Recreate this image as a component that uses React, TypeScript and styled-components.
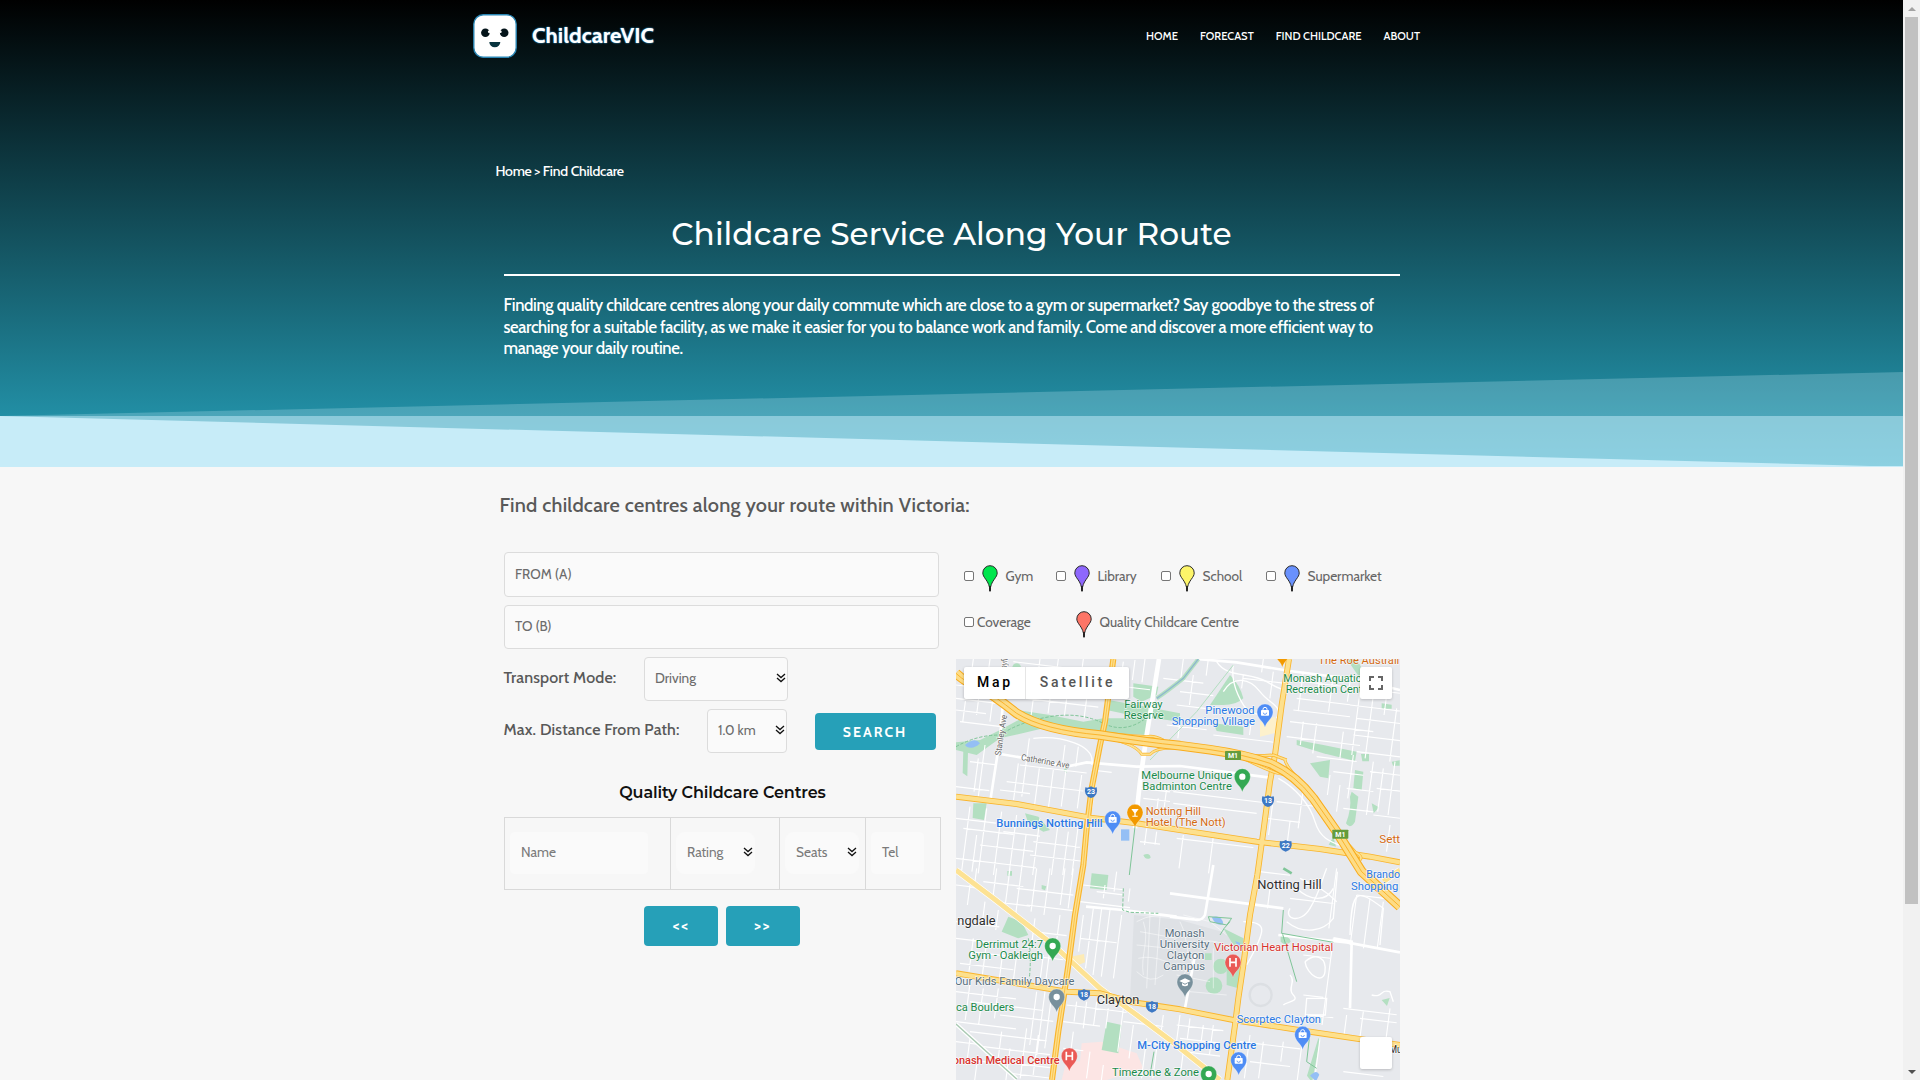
import React from "react";
import styled, { createGlobalStyle } from "styled-components";

const GlobalStyle = createGlobalStyle`
  *, *::before, *::after { box-sizing: border-box; }
  html, body { margin: 0; padding: 0; height: 100%; overflow: hidden; }
  body { font-family: Cabin, Lato, "Liberation Sans", sans-serif; color: #595959; background: #f7f7f7; }
`;

/* ---------- page frame ---------- */

const Page = styled.div`
  display: flex;
  width: 1920px;
  height: 1080px;
  overflow: hidden;
  background: #f7f7f7;
`;

const Content = styled.div`
  width: 1903px;
  height: 1080px;
  overflow: hidden;
`;

const ScrollTrack = styled.div`
  width: 17px;
  height: 1080px;
  display: flex;
  flex-direction: column;
  align-items: center;
  background: #f1f1f1;
`;

const ScrollArrow = styled.div<{ $down?: boolean }>`
  height: 17px;
  width: 17px;
  display: flex;
  align-items: center;
  justify-content: center;
  margin-top: ${(p) => (p.$down ? "auto" : "0")};

  &::before {
    content: "";
    border: 4px solid transparent;
    border-top-width: ${(p) => (p.$down ? "4px" : "0")};
    border-bottom-width: ${(p) => (p.$down ? "0" : "4px")};
    border-top-color: ${(p) => (p.$down ? "#505050" : "transparent")};
    border-bottom-color: ${(p) => (p.$down ? "transparent" : "#a3a3a3")};
  }
`;

const ScrollThumb = styled.div`
  width: 13px;
  height: 887px;
  background: #c1c1c1;
`;

/* ---------- hero ---------- */

const Hero = styled.header`
  position: relative;
  height: 467px;
  color: #fff;
  background: linear-gradient(180deg, #000 0%, #26a0b9 100%);
`;

const Slopes = styled.svg`
  position: absolute;
  left: 0;
  bottom: 0;
  width: 100%;
  height: 95px;
  display: block;
`;

const TopBar = styled.div`
  width: 957px;
  height: 72px;
  margin: 0 auto;
  display: flex;
  align-items: center;
  justify-content: space-between;
  padding: 0 10px 0 0;
`;

const Brand = styled.div`
  display: flex;
  align-items: center;
  gap: 15px;
`;

const BrandName = styled.span`
  font-size: 22px;
  line-height: 28px;
  font-weight: 700;
  letter-spacing: 0.12px;
  padding-bottom: 1px;
  text-shadow: 0 0 2px #2f8fc4, 0 0 1px #2f8fc4;
`;

const Nav = styled.nav`
  display: flex;
  gap: 22px;
  font-size: 11.2px;
  line-height: 16px;
  font-weight: 500;
`;

const HeroBody = styled.div`
  width: 896px;
  margin: 0 auto;
`;

const Breadcrumb = styled.div`
  padding-top: 90px;
  margin-left: -8px;
  font-size: 14px;
  line-height: 18px;
  font-weight: 500;
  letter-spacing: -0.26px;
`;

const HeroTitle = styled.h1`
  margin: 34px 0 0;
  font-family: Montserrat, Lato, sans-serif;
  font-size: 31.2px;
  line-height: 40px;
  font-weight: 500;
  letter-spacing: 0.03px;
  text-align: center;
`;

const Rule = styled.div`
  height: 2px;
  margin-top: 20px;
  background: #fff;
`;

const Lead = styled.p`
  margin: 19px 0 0;
  font-size: 16.7px;
  line-height: 21.7px;
  font-weight: 500;
  letter-spacing: -0.365px;
  white-space: nowrap;
`;

/* ---------- search section ---------- */

const Section = styled.main`
  width: 903px;
  margin: 0 auto;
`;

const SectionTitle = styled.h2`
  margin: 0 0 0 -0.5px;
  padding-top: 24px;
  font-size: 20px;
  line-height: 28px;
  font-weight: 500;
  letter-spacing: 0.21px;
`;

const Columns = styled.div`
  display: flex;
  align-items: flex-start;
  margin-top: 33px;
  padding-left: 4px;
`;

const FormColumn = styled.div`
  width: 437px;
  display: flex;
  flex-direction: column;
`;

const Field = styled.div<{ $w: number; $h?: number; $plain?: boolean; $r?: number }>`
  width: ${(p) => p.$w}px;
  height: ${(p) => p.$h ?? 44}px;
  flex: none;
  display: flex;
  align-items: center;
  justify-content: space-between;
  padding: 0 1px ${(p) => (p.$h === 45 ? 1 : 2)}px 10px;
  border: 1px solid ${(p) => (p.$plain ? "#fafafa" : "#dcdcdc")};
  border-radius: ${(p) => p.$r ?? 4}px;
  background: #fafafa;
  color: ${(p) => (p.$plain ? "#7b7b7b" : "#6c6c6c")};
  font-size: 13.6px;
  line-height: 18px;
  white-space: nowrap;
`;

const FormRow = styled.div`
  display: flex;
  align-items: center;
  height: 44px;
  margin-top: 8px;
`;

const Label = styled.span<{ $w: number }>`
  width: ${(p) => p.$w}px;
  font-size: 16px;
  line-height: 22px;
  font-weight: 500;
  letter-spacing: 0.17px;
  padding-bottom: 2px;
  margin-left: -0.5px;
`;

const Button = styled.button<{ $w: number; $h: number; $size?: number }>`
  width: ${(p) => p.$w}px;
  height: ${(p) => p.$h}px;
  padding: 0;
  border: 0;
  border-radius: 4px;
  background: #26a0b8;
  color: #fff;
  font-family: inherit;
  font-size: ${(p) => p.$size ?? 14}px;
  line-height: 18px;
  font-weight: 700;
  letter-spacing: 2px;
`;

const TableTitle = styled.h3`
  margin: 30px 0 0;
  font-family: Montserrat, Lato, sans-serif;
  font-size: 16px;
  line-height: 20px;
  font-weight: 600;
  letter-spacing: -0.12px;
  text-align: center;
  color: #111;
`;

const FilterTable = styled.div`
  display: grid;
  grid-template-columns: 165px 109px 86px 75px;
  height: 73px;
  margin-top: 14px;
  border: 1px solid #d9d9d9;
`;

const FilterCell = styled.div`
  display: flex;
  align-items: center;
  padding: 0 0 1px 5px;

  & + & {
    border-left: 1px solid #d9d9d9;
  }
`;

const Pager = styled.div`
  display: flex;
  gap: 8px;
  margin: 16px 0 0 140px;
`;

const MapColumn = styled.div`
  width: 444px;
  margin-left: 15px;
`;

const Legend = styled.div<{ $cols: string }>`
  display: grid;
  grid-template-columns: ${(p) => p.$cols};
  height: 46px;
  padding: 2px 0 0 8px;
  align-items: center;
`;

const LegendItem = styled.div`
  display: flex;
  align-items: center;
  font-size: 13.65px;
  line-height: 18px;
  color: #666;
  white-space: nowrap;
`;

const Box = styled.span`
  width: 10px;
  height: 10px;
  flex: none;
  border: 1px solid #767676;
  border-radius: 2px;
  background: #fff;
`;

const PinSlot = styled.svg`
  width: 16px;
  height: 27px;
  margin: 4px 8px 0 7.5px;
  display: block;
  flex: none;
`;

const MapFrame = styled.div`
  position: relative;
  width: 444px;
  height: 421px;
  margin-top: 15px;
  overflow: hidden;
  background: #e8eaed;
`;

const MapArt = styled.svg`
  display: block;
  width: 444px;
  height: 421px;
`;

const MapTypes = styled.div`
  position: absolute;
  left: 8px;
  top: 8px;
  display: flex;
  height: 32px;
  border-radius: 2px;
  background: #fff;
  box-shadow: 0 1px 3px rgba(0, 0, 0, 0.25);
  font: 500 14px/31px Roboto, sans-serif;
`;

const MapType = styled.span<{ $w: number; $active?: boolean }>`
  width: ${(p) => p.$w}px;
  padding-left: 1px;
  text-align: center;
  letter-spacing: 2.7px;
  color: ${(p) => (p.$active ? "#000" : "#565656")};

  & + & {
    padding-left: 0;
    border-left: 1px solid #e6e6e6;
  }
`;

const MapControl = styled.div<{ $top: number }>`
  position: absolute;
  right: 8px;
  top: ${(p) => p.$top}px;
  width: 32px;
  height: 32px;
  display: flex;
  align-items: center;
  justify-content: center;
  border-radius: 2px;
  background: #fff;
  box-shadow: 0 1px 3px rgba(0, 0, 0, 0.2);
`;

/* ---------- small drawings ---------- */

const Chevrons = () => (
  <svg width="10" height="10" viewBox="0 0 10 10" fill="none" stroke="#111" strokeWidth="1.3">
    <path d="M1 1l4 3.600L9 1M1 5l4 3.600L9 5" />
  </svg>
);

const FaceLogo = () => (
  <svg width="44" height="44" viewBox="0 0 44 44">
    <rect x="0.8" y="0.8" width="42.4" height="42.4" rx="9.5" fill="#fff" stroke="#2a86b4" strokeWidth="1.4" />
    <circle cx="12.400" cy="18.800" r="4.3" fill="#04141a" />
    <circle cx="31.200" cy="18.800" r="4.3" fill="#04141a" />
    <circle cx="16.200" cy="17.800" r="1.3" fill="#fff" />
    <circle cx="27.400" cy="17.800" r="1.3" fill="#fff" />
    <path d="M16.300 28h11a5.500 5.200 0 0 1-11 0z" fill="#08343f" />
  </svg>
);

const LegendPin = ({ color }: { color: string }) => (
  <PinSlot viewBox="0 0 16 27">
    <path
      d="M8 26C7.600 20.500 6.200 17.800 3.800 14.400C2 11.900.8 10.200.8 7.900a7.200 7.200 0 0 1 14.400 0c0 2.300-1.200 4-3 6.500C9.800 17.800 8.400 20.500 8 26z"
      fill={color}
      stroke="#2b2b2b"
      strokeWidth="1"
    />
    <path d="M8 21v5.600" stroke="#111" strokeWidth="1.300" />
  </PinSlot>
);

/* ---------- map data ---------- */

type Seg = [number, number, number];

const northSouth: Seg[] = [
  [70, 12, 50], [120, 12, 95], [160, 12, 130], [270, 12, 50], [325, 12, 60], [400, 12, 60],
  [90, 100, 80], [50, 110, 90], [130, 120, 80], [250, 130, 50], [300, 130, 45], [350, 130, 50], [410, 130, 60],
  [520, 20, 90], [555, 15, 60], [585, 12, 70],
  [105, 270, 155], [85, 310, 100], [205, 325, 110], [238, 250, 175], [268, 340, 115], [310, 345, 115], [345, 270, 60],
  [348, 345, 110], [385, 275, 60], [395, 360, 100], [440, 350, 110],
  [60, 455, 190], [80, 540, 110], [110, 460, 195], [155, 470, 190], [200, 480, 180], [228, 540, 110], [270, 490, 170],
  [325, 500, 160], [355, 530, 130], [385, 510, 150],
  [590, 520, 50], [620, 530, 40], [625, 430, 40], [650, 400, 60],
  [700, 12, 70], [730, 60, 90], [775, 12, 50], [880, 60, 40], [940, 12, 40], [970, 50, 80], [905, 190, 50], [690, 200, 50],
  [1060, 50, 120], [1110, 60, 60], [1150, 60, 110], [1200, 80, 60], [1230, 110, 190], [1270, 120, 190], [1310, 120, 60], [1340, 160, 160],
  [1060, 200, 70], [1100, 205, 90], [1180, 230, 80], [1210, 300, 130], [1270, 320, 160], [1300, 340, 130], [1335, 320, 160],
  [1170, 390, 80], [1140, 360, 60], [1320, 510, 80],
  [970, 430, 110], [1060, 400, 120], [1020, 500, 70], [700, 540, 100], [790, 545, 110],
  [80, 640, 60], [140, 640, 80], [180, 640, 120], [215, 640, 140], [260, 640, 130], [300, 640, 140], [345, 640, 110], [370, 640, 120],
  [105, 740, 70], [60, 690, 60], [145, 765, 60], [255, 790, 70], [330, 780, 110], [70, 850, 100], [110, 860, 110], [160, 880, 100],
  [200, 900, 80], [300, 880, 110], [280, 900, 80],
  [400, 780, 110], [430, 760, 180], [455, 760, 200], [480, 765, 200], [515, 780, 190], [540, 700, 40], [500, 650, 60], [465, 690, 40],
  [60, 985, 110], [100, 1000, 110], [145, 1000, 90], [260, 1010, 160], [285, 1010, 190], [305, 1020, 160],
  [380, 1040, 60], [410, 1040, 80], [440, 1040, 70], [475, 1060, 60], [520, 1060, 130], [550, 1110, 100], [590, 1150, 120],
  [60, 1150, 80], [155, 1130, 90], [180, 1180, 95], [230, 1120, 150], [265, 1140, 120], [80, 1230, 45],
  [370, 1130, 80], [420, 1190, 80], [460, 1230, 45], [640, 1080, 60], [620, 1180, 90],
  [690, 1080, 80], [720, 1090, 60], [760, 1110, 50], [790, 1110, 90], [700, 1190, 60],
  [1060, 1135, 140], [1110, 1150, 120], [1190, 1080, 70], [1240, 1070, 90], [1150, 850, 260], [1320, 1060, 100],
  [1220, 720, 150], [1260, 730, 150], [1300, 740, 140], [960, 700, 60], [1160, 640, 180],
  [940, 1160, 110], [900, 1140, 130], [1000, 1160, 60],
];

const eastWest: Seg[] = [
  [18, 90, 70], [18, 130, 120], [18, 165, 90], [30, 200, 130], [190, 20, 180], [225, 130, 220], [480, 90, 120],
  [60, 320, 80], [210, 330, 200], [170, 380, 110], [250, 390, 150], [18, 395, 100], [150, 405, 90],
  [425, 345, 60], [18, 490, 120], [40, 520, 150], [90, 570, 160], [18, 610, 240], [160, 530, 110], [250, 560, 140], [240, 600, 170],
  [580, 430, 80], [570, 560, 60], [570, 400, 90], [640, 70, 120], [690, 110, 100], [680, 150, 90], [650, 210, 120], [880, 70, 120], [790, 240, 180],
  [1020, 75, 330], [1040, 130, 160], [1030, 165, 170], [1020, 200, 250], [1200, 150, 150], [1220, 190, 130], [1010, 245, 220], [1210, 240, 140],
  [1100, 305, 120], [1220, 290, 130], [1150, 350, 90], [1190, 400, 80], [1260, 350, 90], [1280, 400, 70], [1180, 460, 90], [1270, 480, 80],
  [670, 410, 270], [670, 445, 250], [950, 490, 100], [980, 440, 120], [680, 550, 230],
  [18, 690, 60], [100, 680, 120], [200, 700, 170], [130, 740, 110], [230, 750, 140], [18, 800, 130], [250, 830, 100], [18, 850, 120], [60, 890, 170],
  [30, 925, 160], [220, 900, 120], [390, 740, 150], [400, 690, 120], [390, 850, 110], [440, 710, 80],
  [18, 1010, 180], [60, 1040, 220], [150, 1080, 160], [18, 1100, 180], [60, 1130, 230], [100, 1175, 200], [18, 1160, 70], [18, 1210, 100],
  [150, 1220, 150], [180, 1255, 130], [350, 1050, 180], [340, 1100, 110], [520, 1100, 120], [560, 1160, 90], [340, 1180, 60],
  [680, 1110, 140], [690, 1150, 120], [700, 1190, 110], [870, 1160, 180], [900, 1220, 120], [1080, 1080, 70], [1180, 1060, 160], [1060, 900, 80],
  [1060, 1020, 60], [1220, 720, 90], [1020, 730, 130], [930, 650, 90], [1180, 1250, 120], [1230, 1090, 110],
];

const streets =
  northSouth.map(([x, y, l]) => `M${x} ${y}l${-0.13 * l} ${l}`).join("") +
  eastWest.map(([x, y, l]) => `M${x} ${y}l${l} ${0.12 * l}`).join("");

const curvedStreets = [
  "M820 110C850 60 900 70 930 110S1000 150 980 190",
  "M800 20C830 70 900 50 950 80S1000 100 1010 110",
  "M850 30C840 90 880 160 900 170L985 200",
  "M250 250C330 240 440 270 425 330",
  "M1020 760C1000 790 1050 810 1080 760S1110 690 1130 640",
  "M1010 800C1060 840 1120 830 1150 790L1162 650",
  "M1040 700C1080 740 1130 740 1150 700M1050 670C1090 690 1120 700 1160 740",
  "M985 370C1040 400 1080 450 1095 500S1140 560 1180 575",
  "M880 800Q940 800 935 830T890 930",
  "M1065 920C1100 890 1130 910 1125 950S1070 960 1065 920",
  "M1020 960C1040 980 1010 1000 1030 1020S1010 1040 1000 1050",
  "M1070 1030h60l-4 50h-60z",
  "M1200 840C1205 700 1220 700 1300 760L1290 870",
  "M1265 1020C1300 1030 1290 1000 1320 1010L1330 1040",
];

const campusPaths = [
  "M560 800Q610 770 680 790M570 830L680 850M560 870L660 880M565 910Q600 900 650 920M560 950Q600 990 640 960",
  "M600 780L590 1000M630 785L615 990M580 800C600 860 570 900 580 960M690 800C720 860 700 900 740 940",
  "M700 780L780 800L830 840M740 900L700 960L720 1010L830 1020M790 880V1000M750 860Q800 850 840 880M680 960L780 980",
];

const highways = [
  "M1017 12L995 150L975 300L960 380L940 530L922 660L900 780L880 930L865 1030L855 1110L832 1275",
  "M490 12L465 200L450 270L425 400L410 520L400 630L375 780L355 930L342 1020L325 1130L306 1275",
  "M18 425L200 447L420 488L560 505L690 525L920 560L1110 582L1260 605L1350 622",
  "M18 955L200 985L350 1010L450 1015L550 1042L690 1063L850 1095L1080 1130L1350 1170",
];

const diagonals = ["M18 645L130 730L310 870L450 1000L560 1080L660 1155L810 1275", "M1350 645L1300 680"];

const freeway =
  "M18 55Q50 85 80 90Q130 120 200 175Q280 225 450 240Q590 262 690 272L780 284Q880 298 960 325Q1035 358 1090 430L1160 530L1235 650L1350 755";

const ramps = [
  "M470 235Q560 245 590 245Q610 240 640 255",
  "M480 250Q560 270 575 298L600 298Q620 275 690 280",
  "M860 300Q920 305 970 300L1010 315",
  "M870 305Q960 350 985 355Q1060 365 1110 445",
  "M1005 315Q1010 340 1060 385L1130 470",
  "M1150 530Q1190 560 1215 590Q1240 605 1230 615",
];

const arterials = [
  "M627 12L608 130L590 240L570 380L555 520",
  "M150 297L240 312L350 335L410 322L560 335L690 333L960 368",
  "M170 12L150 250L122 430",
  "M740 12L860 22L1020 48L1230 75L1350 105",
  "M660 715L770 730L960 755L1000 760",
  "M790 630L765 780Q755 800 730 793L660 785",
  "M735 900L705 1060",
  "M985 840L1190 862L1350 892",
  "M1150 850L1205 860L1200 1060",
  "M408 755L520 765L680 785",
];

const parks = [
  "M200 165L300 180L400 200L460 190L530 190L600 170L590 240L480 235L380 225L290 215z",
  "M18 262L90 255L150 225L215 190L280 220L230 232L150 250L80 300L18 285z",
  "M550 85L625 95L620 120L575 140L550 125z",
  "M475 135L560 150L690 175L690 200L540 180L470 165z",
  "M780 150L840 60Q870 90 880 130Q860 150 820 150z",
  "M790 205L880 215L880 240L800 228z",
  "M1040 255L1120 270L1220 290L1215 318L1120 295L1040 270z",
  "M1080 325L1140 315L1135 370L1110 365z",
  "M1190 12h30l25 45-20 5z",
  "M1215 345L1240 350L1235 405L1210 400z",
  "M1205 410L1225 425L1215 500Q1200 525 1188 505Q1205 460 1200 425z",
  "M1265 445l22 12-16 18z M1325 320l24-4v16h-20z M1295 145l30 4v12h-30z M1233 297h24v22h-20z",
  "M70 445h40l-8 50-34-6z M40 285l14 4-2 75-14-10z M225 475l40 10 35 40-20 5-45-25z",
  "M425 655L475 660L470 705L420 700z",
  "M175 785L215 800L235 840L205 850L155 830z",
  "M470 1100L515 1110L505 1195L455 1185z",
  "M340 345l10-8v18z M580 600q20-8 22 8-14 10-22-8z M275 690l14 4-4 12-10-4z M172 648h14v14h-14z",
  "M820 820L880 850L880 880L850 870z M830 910L870 925L865 1000L830 990z M765 895h20v20h-20z",
  "M1105 1150l6 2-25 130-15-20z M992 840q25 0 30 20-15 15-30 0z M1150 545l8 30-22-6z M1295 1035l24-6-8 24z",
];

const water = [
  "M45 270Q75 245 90 265Q70 285 50 275z",
  "M513 523h25v34h-25z",
  "M785 787q30-10 35 20-20 10-35-20z",
  "M1080 1262q20-20 28-3l-10 20z",
  "M855 858l16 6-4 14z",
];

type MapText = { x: number; y: number; w: number; t: string; c: string; s?: number; b?: boolean; r?: number };

const green = "#1b8a4b";
const blue = "#2a78e4";
const orange = "#d46a13";
const slate = "#587080";
const red = "#d9332e";
const ink = "#2e2e2e";

const labels: MapText[] = [
  { x: 523, y: 160, w: 115, t: "Fairway", c: green },
  { x: 521, y: 192, w: 120, t: "Reserve", c: green },
  { x: 1105, y: 27, w: 243, t: "The Roe Australi", c: orange },
  { x: 1000, y: 80, w: 262, t: "Monash Aquatic &", c: green },
  { x: 1007, y: 114, w: 258, t: "Recreation Centre", c: green },
  { x: 766, y: 177, w: 148, t: "Pinewood", c: blue },
  { x: 665, y: 211, w: 250, t: "Shopping Village", c: blue },
  { x: 574, y: 372, w: 273, t: "Melbourne Unique", c: green },
  { x: 577, y: 405, w: 269, t: "Badminton Centre", c: green },
  { x: 587, y: 480, w: 166, t: "Notting Hill", c: orange },
  { x: 587, y: 513, w: 240, t: "Hotel (The Nott)", c: orange },
  { x: 139, y: 516, w: 319, t: "Bunnings Notting Hill", c: blue, b: true },
  { x: 1288, y: 564, w: 62, t: "Sett", c: orange },
  { x: 1249, y: 669, w: 101, t: "Brando", c: blue },
  { x: 1203, y: 704, w: 142, t: "Shopping", c: blue },
  { x: 922, y: 702, w: 193, t: "Notting Hill", c: ink, s: 37 },
  { x: 22, y: 810, w: 115, t: "ngdale", c: ink, s: 37 },
  { x: 77, y: 879, w: 202, t: "Derrimut 24:7", c: green },
  { x: 55, y: 913, w: 224, t: "Gym - Oakleigh", c: green },
  { x: 14, y: 991, w: 359, t: "Our Kids Family Daycare", c: slate },
  { x: 18, y: 1069, w: 175, t: "ca Boulders", c: green },
  { x: 440, y: 1046, w: 128, t: "Clayton", c: ink, s: 37 },
  { x: 644, y: 845, w: 120, t: "Monash", c: slate },
  { x: 629, y: 879, w: 149, t: "University", c: slate },
  { x: 650, y: 912, w: 113, t: "Clayton", c: slate },
  { x: 640, y: 945, w: 125, t: "Campus", c: slate },
  { x: 792, y: 888, w: 358, t: "Victorian Heart Hospital", c: red },
  { x: 860, y: 1103, w: 253, t: "Scorptec Clayton", c: blue },
  { x: 562, y: 1181, w: 357, t: "M-City Shopping Centre", c: blue, b: true },
  { x: 8, y: 1227, w: 321, t: "onash Medical Centre", c: red, b: true },
  { x: 486, y: 1263, w: 261, t: "Timezone & Zone", c: green },
  { x: 1318, y: 1193, w: 38, t: "Mu", c: ink, s: 34 },
  { x: 212, y: 315, w: 147, t: "Catherine Ave", c: "#666", s: 26, r: 10 },
  { x: 152, y: 303, w: 124, t: "Stanley Ave", c: "#666", s: 26, r: -81 },
  { x: 166, y: 60, w: 60, t: "Mayfie", c: "#666", s: 26, r: -81 },
];

type Marker = { x: number; y: number; c: string; k: "bag" | "dot" | "h" | "glass" | "cap" };

const markers: Marker[] = [
  { x: 488, y: 492, c: "#4f8df5", k: "bag" },
  { x: 555, y: 472, c: "#f29900", k: "glass" },
  { x: 945, y: 171, c: "#4f8df5", k: "bag" },
  { x: 877, y: 365, c: "#34a853", k: "dot" },
  { x: 997, y: -9, c: "#f29900", k: "dot" },
  { x: 308, y: 873, c: "#34a853", k: "dot" },
  { x: 320, y: 1026, c: "#78909c", k: "dot" },
  { x: 705, y: 981, c: "#78909c", k: "cap" },
  { x: 849, y: 922, c: "#ea5a56", k: "h" },
  { x: 358, y: 1203, c: "#ea5a56", k: "h" },
  { x: 1058, y: 1138, c: "#4f8df5", k: "bag" },
  { x: 866, y: 1215, c: "#4f8df5", k: "bag" },
  { x: 776, y: 1257, c: "#34a853", k: "dot" },
];

const shields: [number, number, string][] = [
  [423, 411, "23"],
  [954, 438, "13"],
  [1007, 572, "22"],
  [402, 1019, "18"],
  [606, 1055, "18"],
];

const MarkerPin = ({ x, y, c, k }: Marker) => (
  <g transform={`translate(${x} ${y})`}>
    <path d="M0 46C-4 28-24 20-24 0A24 24 0 0 1 24 0C24 20 4 28 0 46z" fill={c} stroke="#fff" strokeOpacity="0.5" strokeWidth="1.5" />
    {k === "dot" && <circle r="9.5" fill="#fff" />}
    {k === "bag" && (
      <>
        <rect x="-12" y="-6" width="24" height="17" rx="2" fill="#fff" />
        <path d="M-6-5v-3a6 6 0 0 1 12 0v3" fill="none" stroke="#fff" strokeWidth="3" />
        <path d="M-5 2a5 5 0 0 0 10 0" fill="none" stroke={c} strokeWidth="2.5" />
      </>
    )}
    {k === "glass" && <path d="M-11-10h22L2 2v8h6v3H-8v-3h6V2z" fill="#fff" />}
    {k === "h" && <path d="M-9-13v26M9-13v26M-9 0H9" stroke="#fff" strokeWidth="5" />}
    {k === "cap" && (
      <>
        <path d="M-17-3L0-11 17-3 0 5z" fill="#fff" />
        <path d="M-9 3v7q9 6 18 0V3L0 8z" fill="#fff" />
      </>
    )}
  </g>
);

const RoadMap = () => (
  <MapArt viewBox="18 12 1332 1263" preserveAspectRatio="none" fontFamily="Roboto, sans-serif">
    <rect x="18" y="12" width="1332" height="1263" fill="#e7e9ed" />
    <path d="M552 780L690 795L885 850L850 1090L690 1060L540 1035z" fill="#dee1e5" />
    <path d="M395 1165L455 1160L560 1195L580 1240L470 1275L335 1275L350 1215L390 1220z" fill="#fce5e4" />
    {parks.map((d) => (
      <path key={d} d={d} fill="#b3dfc1" />
    ))}
    <circle cx="812" cy="934" r="23" fill="#b3dfc1" />
    <circle cx="792" cy="992" r="25" fill="#b3dfc1" />
    <circle cx="200" cy="38" r="13" fill="#b3dfc1" />
    <g fill="none" stroke="#fff">
      <path d={streets} strokeWidth="3.4" />
      {curvedStreets.map((d) => (
        <path key={d} d={d} strokeWidth="4" />
      ))}
      {campusPaths.map((d) => (
        <path key={d} d={d} strokeWidth="2.5" strokeOpacity="0.6" />
      ))}
      {arterials.map((d, i) => (
        <path key={d} d={d} strokeWidth={i === 0 ? 14 : 8} />
      ))}
    </g>
    <circle cx="932" cy="1020" r="33" fill="none" stroke="#dcdfe3" strokeWidth="7" />
    <path d="M18 1107L200 1272" stroke="#fff" strokeWidth="12" />
    <path d="M18 1107L200 1272" stroke="#a9c9b2" strokeWidth="4" />
    {water.map((d) => (
      <path key={d} d={d} fill="#94bff5" />
    ))}
    <g fill="none" stroke="#7fc598" strokeWidth="3">
      <path d="M555 515L538 660" />
      <path d="M18 275Q80 240 150 240Q210 200 300 185T460 205T600 180" strokeDasharray="10 5" />
      <path d="M620 130Q650 110 700 70L745 12" strokeWidth="12" stroke="#b3dfc1" />
      <path d="M620 130Q650 110 700 70L745 12" stroke="#8fb7cf" strokeWidth="4" />
      <path d="M600 315L740 170L850 30" strokeWidth="3" stroke="#b3dfc1" />
      <path d="M520 700L518 765L540 772L625 775" strokeDasharray="10 5" />
      <path d="M235 850Q245 900 238 970" strokeDasharray="10 5" />
      <path d="M775 785L845 790L830 810L780 800zM810 840Q820 820 840 800" />
      <path d="M1000 765L995 835L1150 862M998 838L1040 980" />
      <path d="M1078 1150L1070 1220L1100 1240M612 1190L600 1260" />
      <path d="M1000 640L1025 655" strokeWidth="8" />
    </g>
    <path d="M930 200l45-15 15 45-60 15z" fill="#fdf1cc" />
    <path d="M362 905l40-8 3 25-25 10z" fill="#fdebb5" />

    <g fill="none" strokeLinejoin="round">
      {diagonals.map((d) => (
        <path key={d} d={d} stroke="#fff" strokeWidth="19" />
      ))}
      {diagonals.map((d) => (
        <path key={d + "f"} d={d} stroke="#fde293" strokeWidth="15" />
      ))}
      {highways.map((d) => (
        <path key={d} d={d} stroke="#f9b42c" strokeWidth="18" />
      ))}
      {highways.map((d, i) => (
        <path key={d + "f"} d={d} stroke="#fde08d" strokeWidth={i === 1 ? 11 : 13} />
      ))}
      <path d={highways[1]} stroke="#f9b42c" strokeWidth="2" />
      {ramps.map((d) => (
        <path key={d} d={d} stroke="#f9b42c" strokeWidth="9" />
      ))}
      {ramps.map((d) => (
        <path key={d + "f"} d={d} stroke="#fde08d" strokeWidth="5" />
      ))}
      <path d={freeway} stroke="#f9ac1c" strokeWidth="29" />
      <path d={freeway} stroke="#fddc86" strokeWidth="23" />
      <path d={freeway} stroke="#f9ac1c" strokeWidth="2.5" />
    </g>

    {shields.map(([x, y, n]) => (
      <g key={`${x}`} transform={`translate(${x} ${y})`}>
        <path d="M-17-14Q-8-11 0-17Q8-11 17-14Q20-2 16 6Q12 15 0 18Q-12 15-16 6Q-20-2-17-14z" fill="#3d78c4" />
        <text y="7" textAnchor="middle" fontSize="21" fontWeight="700" fill="#fff">
          {n}
        </text>
      </g>
    ))}
    {[[849, 301], [1171, 537]].map(([x, y]) => (
      <g key={x} transform={`translate(${x} ${y})`}>
        <rect x="-24" y="-13" width="48" height="27" rx="2" fill="#659c3c" />
        <text y="8" textAnchor="middle" fontSize="21" fontWeight="700" fill="#fff">
          M1
        </text>
      </g>
    ))}
    {markers.map((m) => (
      <MarkerPin key={`${m.x}-${m.y}`} {...m} />
    ))}
    {labels.map((l) => (
      <text
        key={l.t + l.y}
        x={l.x}
        y={l.y}
        textLength={l.w}
        lengthAdjust="spacingAndGlyphs"
        fontSize={l.s ?? 33}
        fontWeight={l.b ? 500 : 400}
        fill={l.c}
        stroke="#fff"
        strokeWidth="4"
        strokeOpacity="0.7"
        strokeLinejoin="round"
        paintOrder="stroke"
        transform={l.r ? `rotate(${l.r} ${l.x} ${l.y})` : undefined}
      >
        {l.t}
      </text>
    ))}
  </MapArt>
);

/* ---------- page ---------- */

const places: [string, string][] = [
  ["Gym", "#00e64d"],
  ["Library", "#8e67fd"],
  ["School", "#fdf569"],
  ["Supermarket", "#6991fd"],
];

const SearchButton = styled(Button)`
  margin: 1px 0 0 27.5px;
`;

const TightBox = styled(Box)`
  margin-right: 3px;
`;

export default function App() {
  return (
    <>
      <GlobalStyle />
      <Page>
        <Content>
          <Hero>
            <Slopes viewBox="0 0 1903 95" preserveAspectRatio="none">
              <path d="M0 44L1903 0V44z" fill="#c7ecf8" fillOpacity="0.25" />
              <path d="M0 44H1903V95H0z" fill="#c7ecf8" fillOpacity="0.63" />
              <path d="M0 44L1870 94H1903V95H0z" fill="#c7ecf8" />
            </Slopes>
            <TopBar>
              <Brand>
                <FaceLogo />
                <BrandName>ChildcareVIC</BrandName>
              </Brand>
              <Nav>
                <span>HOME</span>
                <span>FORECAST</span>
                <span>FIND CHILDCARE</span>
                <span>ABOUT</span>
              </Nav>
            </TopBar>
            <HeroBody>
              <Breadcrumb>Home &gt; Find Childcare</Breadcrumb>
              <HeroTitle>Childcare Service Along Your Route</HeroTitle>
              <Rule />
              <Lead>
                Finding quality childcare centres along your daily commute which are close to a gym or supermarket? Say goodbye to the stress of
                <br />
                searching for a suitable facility, as we make it easier for you to balance work and family. Come and discover a more efficient way to
                <br />
                manage your daily routine.
              </Lead>
            </HeroBody>
          </Hero>

          <Section>
            <SectionTitle>Find childcare centres along your route within Victoria:</SectionTitle>
            <Columns>
              <FormColumn>
                <Field $w={435} $h={45}>FROM (A)</Field>
                <FormRow>
                  <Field $w={435}>TO (B)</Field>
                </FormRow>
                <FormRow>
                  <Label $w={140.5}>Transport Mode:</Label>
                  <Field $w={144}>
                    Driving
                    <Chevrons />
                  </Field>
                </FormRow>
                <FormRow>
                  <Label $w={203.5}>Max. Distance From Path:</Label>
                  <Field $w={80}>
                    1.0 km
                    <Chevrons />
                  </Field>
                  <SearchButton $w={121} $h={37}>SEARCH</SearchButton>
                </FormRow>
                <TableTitle>Quality Childcare Centres</TableTitle>
                <FilterTable>
                  <FilterCell><Field $w={138} $h={42} $plain>Name</Field></FilterCell>
                  <FilterCell><Field $w={79} $h={42} $r={8} $plain>Rating<Chevrons /></Field></FilterCell>
                  <FilterCell><Field $w={74} $h={42} $r={8} $plain>Seats<Chevrons /></Field></FilterCell>
                  <FilterCell><Field $w={53} $h={42} $plain>Tel</Field></FilterCell>
                </FilterTable>
                <Pager>
                  <Button $w={74} $h={40} $size={16}>&lt;&lt;</Button>
                  <Button $w={74} $h={40} $size={16}>&gt;&gt;</Button>
                </Pager>
              </FormColumn>

              <MapColumn>
                <Legend $cols="92px 105px 105px 1fr">
                  {places.map(([name, color]) => (
                    <LegendItem key={name}>
                      <Box />
                      <LegendPin color={color} />
                      {name}
                    </LegendItem>
                  ))}
                </Legend>
                <Legend $cols="104px 1fr">
                  <LegendItem>
                    <TightBox />
                    Coverage
                  </LegendItem>
                  <LegendItem>
                    <LegendPin color="#fd7567" />
                    Quality Childcare Centre
                  </LegendItem>
                </Legend>
                <MapFrame>
                  <RoadMap />
                  <MapTypes>
                    <MapType $w={61} $active>Map</MapType>
                    <MapType $w={104}>Satellite</MapType>
                  </MapTypes>
                  <MapControl $top={8}>
                    <svg width="14" height="14" viewBox="0 0 14 14" fill="none" stroke="#666" strokeWidth="2">
                      <path d="M1 5V1h4M9 1h4v4M13 9v4H9M5 13H1V9" />
                    </svg>
                  </MapControl>
                  <MapControl $top={378} />
                </MapFrame>
              </MapColumn>
            </Columns>
          </Section>
        </Content>
        <ScrollTrack>
          <ScrollArrow />
          <ScrollThumb />
          <ScrollArrow $down />
        </ScrollTrack>
      </Page>
    </>
  );
}
